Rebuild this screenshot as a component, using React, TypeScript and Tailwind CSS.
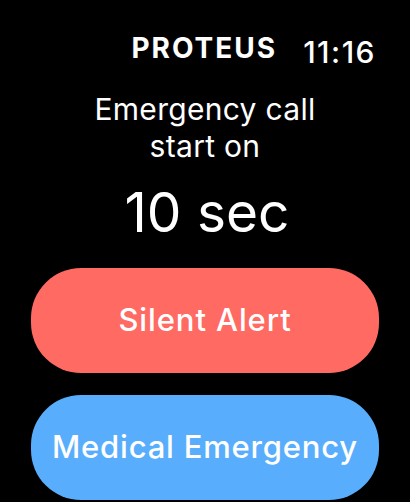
export default function App() {
  return (
    <div
      className="w-[410px] h-[502px] bg-black text-white overflow-hidden flex flex-col"
      style={{ fontFamily: "Inter, 'Noto Sans', sans-serif" }}
    >
      <div className="flex items-start justify-end gap-[26px] pr-[34px] pt-[34px]">
        <span className="text-[28px] font-bold leading-none tracking-[2px]">PROTEUS</span>
        <span className="text-[30px] font-medium leading-none tracking-[1.5px] mt-[3px]">11:16</span>
      </div>
      <div className="flex flex-col items-center mt-[24px]">
        <p className="text-[30px] leading-[37px] tracking-[0.3px] text-center">
          Emergency call
          <br />
          start on
        </p>
        <p className="text-[55px] leading-none mt-[20px] ml-[4px]">10 sec</p>
      </div>
      <div className="flex flex-col gap-[22px] px-[31px] mt-[28px]">
        <button className="h-[105px] w-[348px] rounded-[50px] bg-[#ff6a63] text-[31px] font-medium tracking-[0.9px]">
          Silent Alert
        </button>
        <button className="h-[105px] w-[348px] rounded-[50px] bg-[#58adfc] text-[31px] font-medium tracking-[0.8px]">
          Medical Emergency
        </button>
      </div>
    </div>
  );
}
